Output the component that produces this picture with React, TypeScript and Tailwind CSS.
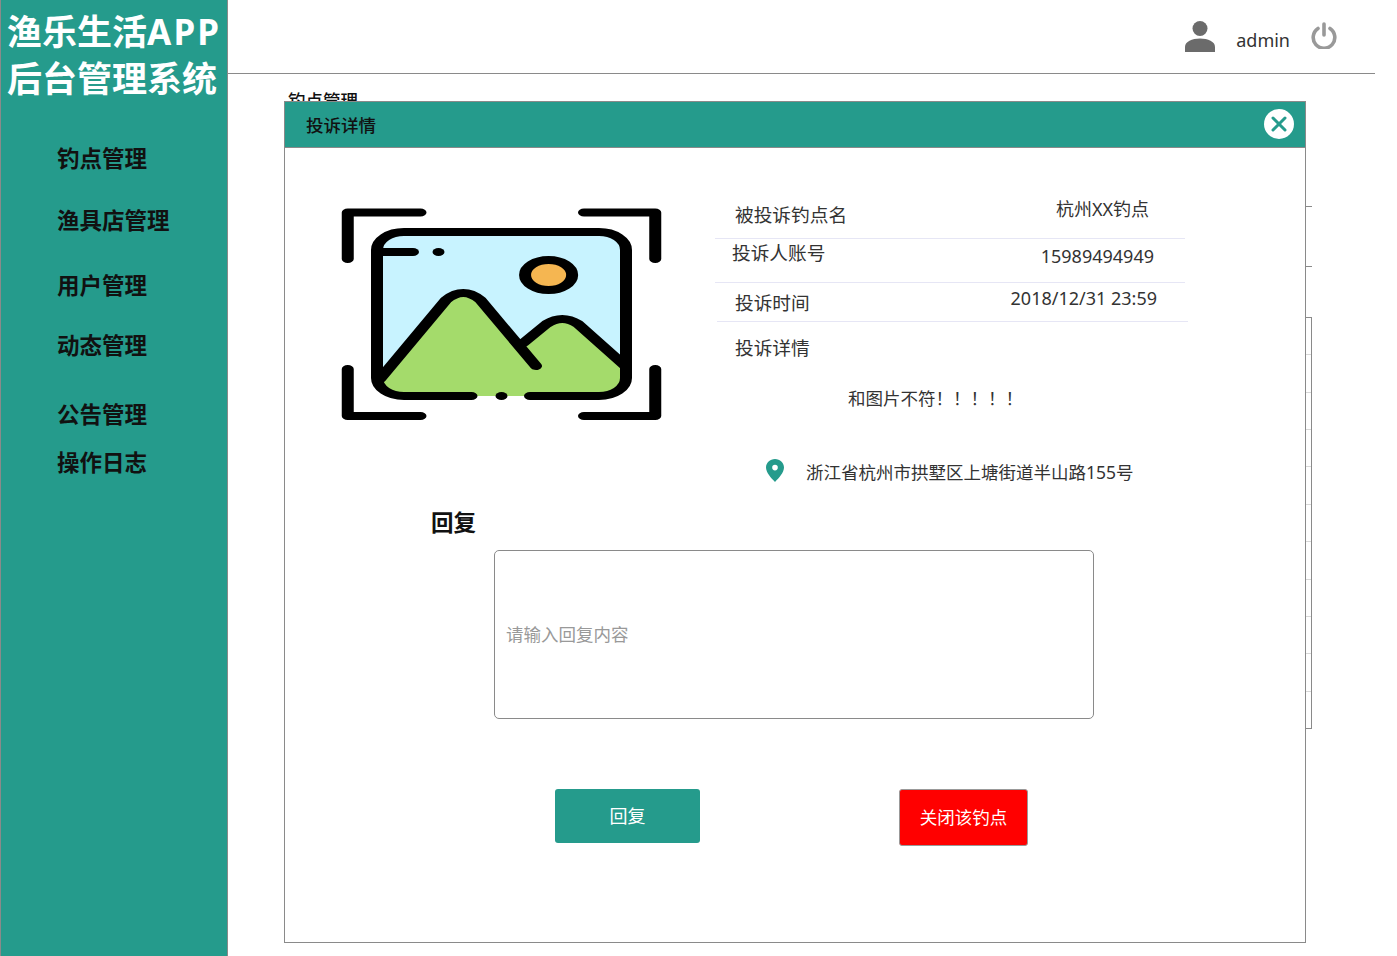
const navItems = [
  { label: "钓点管理", cls: "mt-[42px]" },
  { label: "渔具店管理", cls: "mt-[32px]" },
  { label: "用户管理", cls: "mt-[35px]" },
  { label: "动态管理", cls: "mt-[30px]" },
  { label: "公告管理", cls: "mt-[39px]" },
  { label: "操作日志", cls: "mt-[18px]" },
];

const tableRows = [0, 1, 2, 3, 4, 5, 6, 7, 8, 9, 10];

function PictureIcon() {
  return (
    <svg viewBox="0 0 214 212" width={321} height={212} preserveAspectRatio="none" className="block shrink-0" fill="none">
      <path
        d="M24 42A18 18 0 0 1 42 24H172A18 18 0 0 1 190 42V170A18 18 0 0 1 172 188H42A18 18 0 0 1 24 170Z"
        fill="#c8f3ff"
      />
      <path
        d="M26 172L70 92Q81.5 78 93 92L121 135L137 116Q147.5 106 158 116L189.5 158V170A18 18 0 0 1 172 188H42A18 18 0 0 1 26 172Z"
        fill="#a4db6b"
      />
      <g stroke="#000" strokeWidth={8} strokeLinecap="round" strokeLinejoin="round">
        <path d="M4.5 51V4.5H53" />
        <path d="M162 4.5H209.5V51" />
        <path d="M4.5 161V208H53" />
        <path d="M209.5 161V208H162" />
        <path d="M87 188H42A18 18 0 0 1 24 170V42A18 18 0 0 1 42 24H172A18 18 0 0 1 190 42V170A18 18 0 0 1 172 188H126" />
        <path d="M107 188H107.01" />
        <path d="M28 44H48" />
        <path d="M65 44H65.01" />
        <path d="M26 171L70 92Q81.5 78 93 92L130 158" />
        <path d="M121.5 135L137 116Q147.5 106 158 116L189.5 158" />
        <ellipse cx={138.4} cy={67} rx={15.7} ry={15} fill="#f5b651" />
      </g>
    </svg>
  );
}

function UserIcon() {
  return (
    <svg viewBox="0 0 30 31" width={30} height={31} fill="#6b6b6b" className="shrink-0">
      <circle cx={15} cy={7.5} r={7.5} />
      <path d="M0 31V26C0 20.5 7 17.5 15 17.5S30 20.5 30 26V31Z" />
    </svg>
  );
}

function PowerIcon() {
  return (
    <svg viewBox="0 0 26 27" width={26} height={27} fill="none" stroke="#999" strokeWidth={3.6} strokeLinecap="round" className="block shrink-0">
      <path d="M13 2V13" />
      <path d="M7 6.5A10.8 10.8 0 1 0 19 6.5" />
    </svg>
  );
}

function PinIcon() {
  return (
    <svg viewBox="0 0 18 23" width={18} height={23} className="shrink-0">
      <path
        fillRule="evenodd"
        d="M9 0C4 0 0 3.8 0 8.6C0 13.5 5 19 9 23C13 19 18 13.5 18 8.6C18 3.8 14 0 9 0ZM9 5.8A2.8 2.8 0 1 1 9 11.4A2.8 2.8 0 1 1 9 5.8Z"
        fill="#259b8c"
      />
    </svg>
  );
}

function CloseButton() {
  return (
    <div className="w-[30px] h-[30px] mb-[2px] rounded-full bg-white flex items-center justify-center">
      <svg viewBox="0 0 16 16" width={16} height={16} fill="none" stroke="#259b8c" strokeWidth={3} strokeLinecap="round">
        <path d="M2 2L14 14" />
        <path d="M14 2L2 14" />
      </svg>
    </div>
  );
}

function ComplaintModal() {
  return (
    <div className="absolute left-[284px] top-[101px] w-[1022px] h-[842px] bg-white border border-[#8a8a8a] text-[#333]">
      <div className="h-[46px] bg-[#259b8c] border-b border-[#8a8a8a] flex items-center justify-between pl-[21px] pr-[11px]">
        <span className="pt-[2px] text-[17.5px] font-medium text-[#111]">投诉详情</span>
        <CloseButton />
      </div>

      <div className="flex">
        <div className="ml-[56px] mt-[60px]">
          <PictureIcon />
        </div>

        <div className="ml-[53px] mt-[48px] text-[18.7px] leading-[26px]">
          <div className="w-[470px] h-[43px] border-b border-[#e6e6f5] flex justify-between pl-[20px] pr-[36px]">
            <span className="mt-[6px]">被投诉钓点名</span>
            <span className="text-[18px]">杭州XX钓点</span>
          </div>
          <div className="w-[470px] h-[44px] border-b border-[#e6e6f5] flex justify-between pl-[17px] pr-[31px]">
            <span className="mt-[1px]">投诉人账号</span>
            <span className="mt-[4px] text-[18px]">15989494949</span>
          </div>
          <div className="ml-[2px] w-[471px] h-[39px] border-b border-[#e6e6f5] flex justify-between pl-[18px] pr-[31px]">
            <span className="mt-[7px]">投诉时间</span>
            <span className="mt-[2px] text-[18px]">2018/12/31 23:59</span>
          </div>
          <div className="ml-[20px] mt-[13px]">投诉详情</div>
          <div className="ml-[133px] mt-[24px] text-[17.5px]">和图片不符！！！！！</div>
          <div className="ml-[51px] mt-[47px] flex items-start gap-[22px] text-[17.5px]">
            <span className="mt-[1px]">
              <PinIcon />
            </span>
            <span className="mt-[1px]">浙江省杭州市拱墅区上塘街道半山路155号</span>
          </div>
        </div>
      </div>

      <div className="ml-[146px] mt-[23px] text-[22.5px] leading-[30px] font-bold text-[#111]">回复</div>

      <input
        placeholder="请输入回复内容"
        className="block ml-[209px] mt-[12px] w-[600px] h-[169px] px-[11px] pb-[2px] border border-[#8a8a8a] rounded-[5px] text-[17.5px] placeholder:text-[#999] outline-none"
      />

      <div className="flex items-start ml-[270px] mt-[70px]">
        <button className="w-[145px] h-[54px] rounded-[3px] bg-[#259b8c] text-white text-[18px]">回复</button>
        <button className="ml-[199px] w-[129px] h-[57px] rounded-[3px] bg-[#ff0000] border border-[#999] text-white text-[17.5px]">
          关闭该钓点
        </button>
      </div>
    </div>
  );
}

export default function App() {
  return (
    <div className="relative w-[1397px] h-[956px] overflow-hidden bg-white flex font-['Noto_Sans','Noto_Sans_CJK_SC',sans-serif]">
      <aside className="w-[228px] h-full shrink-0 bg-[#259b8c] border-x border-[#8a8a8a]">
        <div className="pl-[6px] pt-[8px] text-[35px] leading-[47px] font-bold text-white whitespace-nowrap">
          <div>
            渔乐生活<span className="tracking-[2.2px]">APP</span>
          </div>
          <div>后台管理系统</div>
        </div>
        <ul className="pl-[56px] text-[22.5px] leading-[30px] font-bold text-[#111]">
          {navItems.map((item) => (
            <li key={item.label} className={item.cls}>
              {item.label}
            </li>
          ))}
        </ul>
      </aside>

      <main className="flex-1">
        <header className="w-[1147px] h-[74px] border-b border-[#8a8a8a] flex items-center justify-end pr-[38px]">
          <span className="mb-[1px]">
            <UserIcon />
          </span>
          <span className="ml-[21px] mt-[8px] text-[18px] text-[#333]">admin</span>
          <span className="ml-[21px] mb-[2px]">
            <PowerIcon />
          </span>
        </header>

        <div className="ml-[60px] w-[1024px]">
          <div className="mt-[14px] text-[17.5px] leading-[24px] font-medium text-[#111]">钓点管理</div>
          <div className="h-[95px] border-b border-[#8a8a8a]" />
          <div className="h-[60px] border-b border-[#8a8a8a]" />
          <div className="mt-[50px] h-[412px] border border-[#8a8a8a] flex flex-col">
            {tableRows.map((row) => (
              <div key={row} className="flex-1 border-b border-[#d8d8d8] last:border-b-0" />
            ))}
          </div>
        </div>
      </main>

      <ComplaintModal />
    </div>
  );
}
